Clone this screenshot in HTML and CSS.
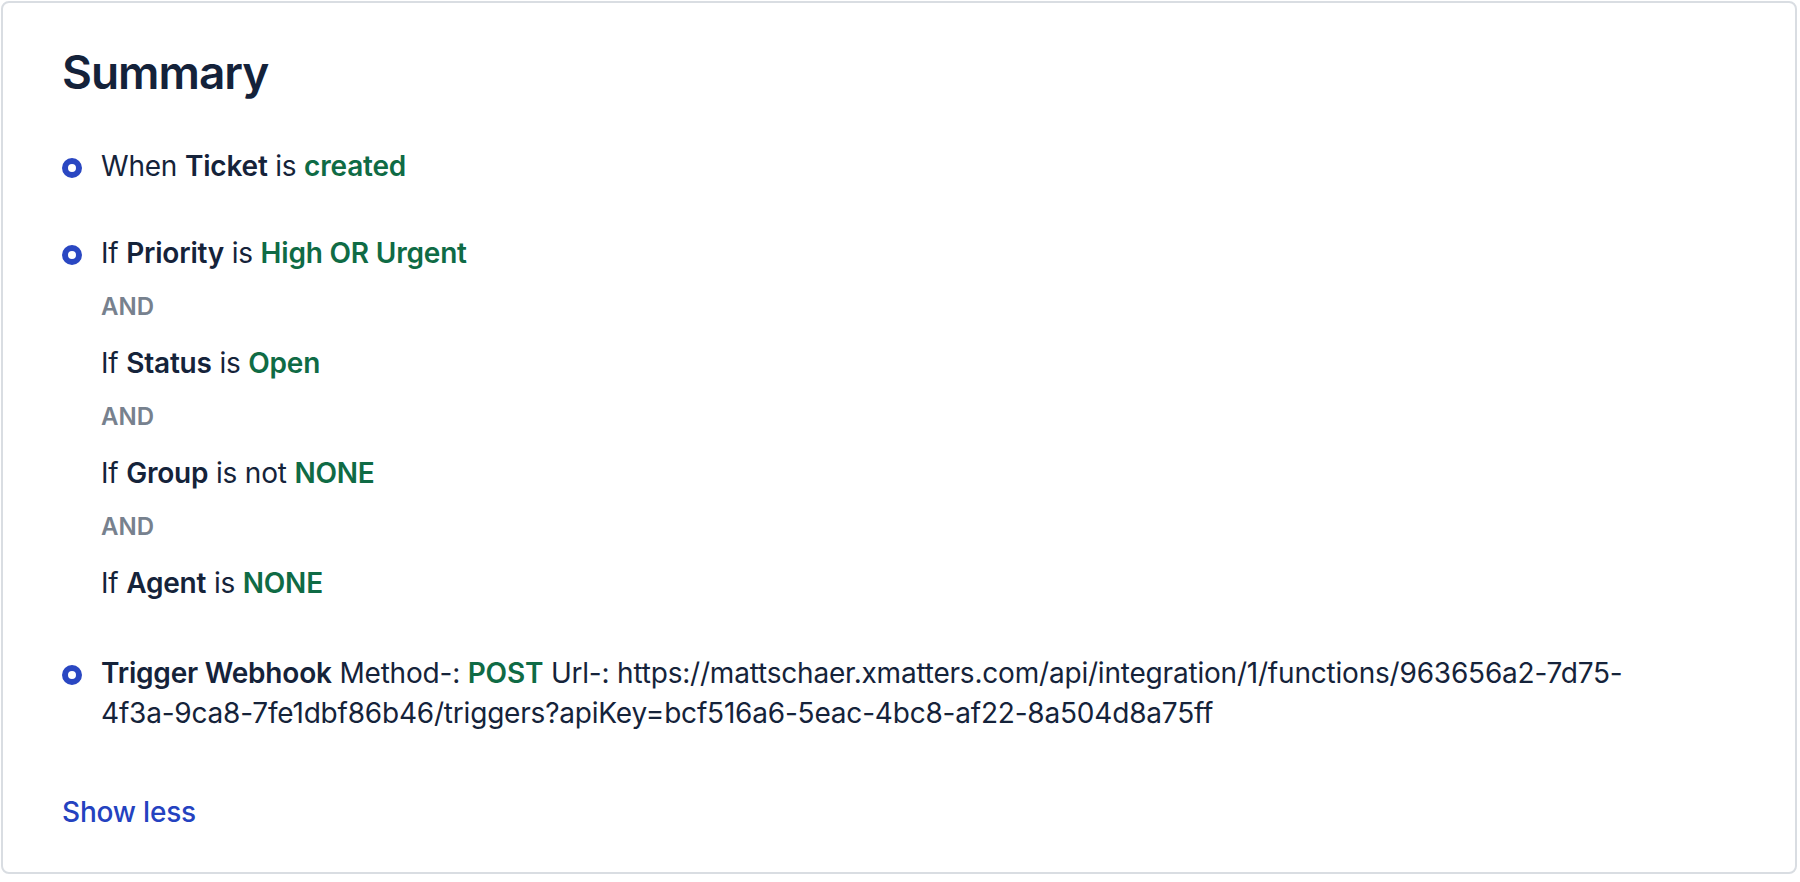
FILE: index.html
```html
<!DOCTYPE html>
<html lang="en">
<head>
<meta charset="utf-8">
<title>Summary</title>
<link rel="stylesheet" href="styles.css">
</head>
<body>
<section class="card">
  <h2 class="title">Summary</h2>

  <div class="item item-when">
    <span class="bullet"></span>
    <div class="item-body">
      <p class="line">When <b>Ticket</b> is <span class="val">created</span></p>
    </div>
  </div>

  <div class="item item-if">
    <span class="bullet"></span>
    <div class="item-body">
      <p class="line">If <b>Priority</b> is <span class="val">High OR Urgent</span></p>
      <p class="and">AND</p>
      <p class="line">If <b>Status</b> is <span class="val">Open</span></p>
      <p class="and">AND</p>
      <p class="line">If <b>Group</b> is not <span class="val">NONE</span></p>
      <p class="and">AND</p>
      <p class="line">If <b>Agent</b> is <span class="val">NONE</span></p>
    </div>
  </div>

  <div class="item item-action">
    <span class="bullet"></span>
    <div class="item-body">
      <p class="line"><b>Trigger Webhook</b> Method-: <span class="val">POST</span> Url-: https://mattschaer.xmatters.com/api/integration/1/functions/963656a2-7d75-<br>4f3a-9ca8-7fe1dbf86b46/triggers?apiKey=bcf516a6-5eac-4bc8-af22-8a504d8a75ff</p>
    </div>
  </div>

  <a class="toggle" href="#">Show less</a>
</section>
</body>
</html>
```

FILE: styles.css
```css
* {
  box-sizing: border-box;
}

html, body {
  margin: 0;
  padding: 0;
  background: #ffffff;
}

body {
  font-family: Inter, "Noto Sans", "Liberation Sans", sans-serif;
  color: #15233a;
}

.card {
  margin: 1px 3px 0 1px;
  border: 2px solid #d9dde2;
  border-radius: 8px;
  padding: 40px 59px 40px 59px;
  background: #ffffff;
}

.title {
  margin: 0;
  font-size: 46px;
  line-height: 58px;
  font-weight: 600;
  letter-spacing: -1px;
  color: #14223a;
}

.item {
  display: flex;
  align-items: flex-start;
}

.item-when {
  margin-top: 45px;
}

.item-if {
  margin-top: 47px;
}

.item-action {
  margin-top: 50px;
}

.bullet {
  flex: none;
  width: 20px;
  height: 20px;
  margin-top: 12px;
  margin-right: 19px;
  border: 6px solid #2a47c2;
  border-radius: 50%;
  background: #ffffff;
}

.item-body {
  flex: 1;
  min-width: 0;
}

.line {
  margin: 0;
  font-size: 28px;
  line-height: 40px;
  font-weight: 400;
  letter-spacing: -0.2px;
  white-space: nowrap;
}

.line b {
  font-weight: 600;
}

.val {
  color: #0f6b45;
  font-weight: 600;
}

.and {
  margin: 18px 0 20px;
  font-size: 24px;
  line-height: 32px;
  font-weight: 600;
  color: #77818e;
}

.toggle {
  display: block;
  width: max-content;
  margin-top: 59px;
  font-size: 28px;
  line-height: 40px;
  font-weight: 500;
  letter-spacing: -0.2px;
  color: #2442c0;
  text-decoration: none;
}
```
